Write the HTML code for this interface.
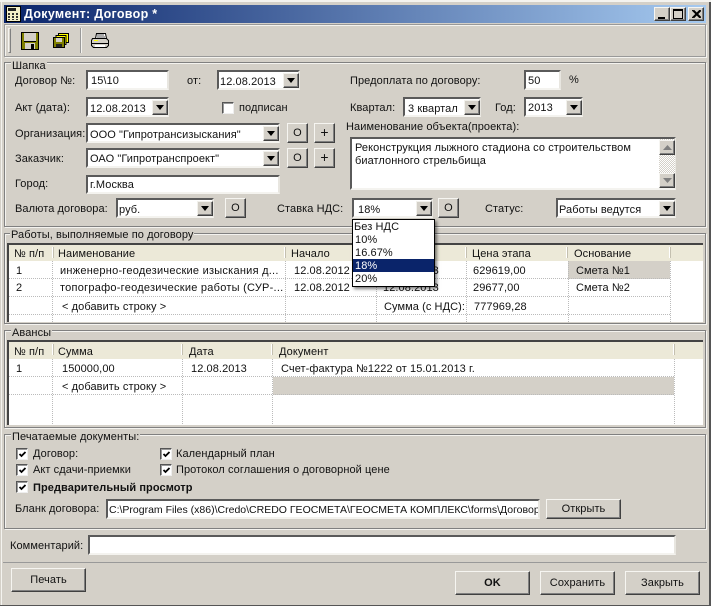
<!DOCTYPE html>
<html><head><meta charset="utf-8"><style>
html,body{margin:0;padding:0;background:#d4d0c8}
#w{position:relative;width:711px;height:606px;overflow:hidden;background:#d4d0c8;font:11px "Liberation Sans",sans-serif;color:#111;letter-spacing:.08px}
#w div,#w span,#w svg{position:absolute;box-sizing:border-box}
.t{white-space:nowrap;line-height:14px}
.f{background:#fff;border:2px solid;border-color:#5a5a5a #e8e6e0 #f4f3ef #5a5a5a}
.a{background:#d4d0c8;border:1px solid;border-color:#f2f1ec #404040 #404040 #f2f1ec;width:16px;height:15px;box-shadow:inset -1px -1px 0 #808080}
.a:after{content:"";position:absolute;left:3px;top:4px;border:4px solid transparent;border-top:5px solid #000;border-bottom:0}
.b{background:#d4d0c8;border:1px solid;border-color:#f6f5f1 #404040 #404040 #f6f5f1;box-shadow:inset -1px -1px 0 #808080;text-align:center;line-height:18px}
.g{border:1px solid #808080;box-shadow:inset 1px 1px 0 #f4f3ef,1px 1px 0 #f4f3ef}
.c{background:#fff;border:1px solid;border-color:#555 #eee #eee #555;width:12px;height:12px;box-shadow:inset 1px 1px 0 #999}
.c svg{left:1px;top:1px}
.h{background:#ece9d8}
.v{width:0;border-left:1px dotted #bbb}
.l{height:0;border-top:1px dotted #bbb}
.s{background:#fff;border-right:1px solid #c4c0b0;width:2px}
.lb{background:#d4d0c8;padding:0 1px}
.p{font-size:14px;line-height:17px}
</style></head><body><div id="w">

<div style="left:0;top:0;width:711px;height:2px;background:#f4f3ef"></div>
<div style="left:1px;top:2px;width:1px;height:604px;background:#f4f3ef"></div>
<div style="left:709px;top:2px;width:2px;height:604px;background:#555"></div>
<div style="left:0;top:605px;width:711px;height:1px;background:#555"></div>

<!-- title -->
<div style="left:4px;top:5px;width:702px;height:18px;background:linear-gradient(90deg,#0a246a,#a6caf0)"></div>
<svg style="left:6px;top:6px" width="16" height="16" viewBox="0 0 16 16"><rect x="0.5" y="0.5" width="14" height="15" fill="#f4efc8" stroke="#000"/><rect x="2" y="2" width="8" height="3" fill="#222"/><path d="M2 7h2v2H2zM6 7h2v2H6zM10 7h2v2h-2zM2 10h2v2H2zM6 10h2v2H6zM10 10h2v2h-2zM2 13h2v1H2zM6 13h2v1H6zM10 13h2v1h-2z" fill="#333"/></svg>
<span class="t" style="left:24px;top:7px;color:#fff;font-weight:bold;font-size:12.5px;letter-spacing:.3px">Документ: Договор *</span>
<div class="b" style="left:654px;top:7px;width:16px;height:14px"><span style="left:3px;top:9px;width:7px;height:2px;background:#000"></span></div>
<div class="b" style="left:670px;top:7px;width:16px;height:14px"><span style="left:2px;top:1px;width:10px;height:10px;border:1px solid #000;border-top-width:2px"></span></div>
<div class="b" style="left:688px;top:7px;width:16px;height:14px"><svg style="left:3px;top:2px" width="9" height="8" viewBox="0 0 9 8"><path d="M0 0l8 8M1.500 0l8 8M8 0l-8 8M9.500 0l-8 8" stroke="#000" fill="none" stroke-width="1.100"/></svg></div>

<!-- toolbar -->
<div style="left:4px;top:24px;width:702px;height:33px;border:1px solid #999;box-shadow:inset 1px 1px 0 #f4f3ef,1px 1px 0 #f4f3ef"></div>
<div style="left:8px;top:28px;width:3px;height:25px;background:#d4d0c8;border:1px solid;border-color:#f4f3ef #808080 #808080 #f4f3ef"></div>
<div style="left:80px;top:28px;width:2px;height:25px;border-left:1px solid #999;border-right:1px solid #f4f3ef"></div>
<svg style="left:21px;top:32px" width="18" height="18" viewBox="0 0 18 18"><path d="M0.500 0.500H17.500V17.500H0.500Z" fill="#808000" stroke="#000"/><rect x="3" y="1" width="12" height="8" fill="#d4d0c8"/><rect x="3" y="9" width="12" height="1" fill="#000"/><rect x="4" y="11" width="10" height="6" fill="#d4d0c8"/><rect x="10" y="12" width="3" height="5" fill="#000"/></svg>
<svg style="left:53px;top:33px" width="16" height="15" viewBox="0 0 16 15"><path d="M5.500 0.500H15.500V9.500H5.500Z" fill="#ffff00" stroke="#000"/><path d="M3 2.500H13V11.500H3Z" fill="#ffff00" stroke="#000"/><path d="M0.500 4.500H11.500V14.500H0.500Z" fill="#808000" stroke="#000"/><rect x="3" y="5" width="6" height="4" fill="#d4d0c8"/><rect x="3" y="11" width="6" height="3" fill="#222"/></svg>
<svg style="left:91px;top:33px" width="18" height="16" viewBox="0 0 18 16"><path d="M5.500 0.500H14.500L15.500 5.500H4.500Z" fill="#fff" stroke="#000"/><path d="M6 2h7M6 4h8" stroke="#555"/><path d="M1.500 5.500H15.500L17.500 7.500V12.500L15.500 14.500H2.500L0.500 12.500V7.500Z" fill="#d4d0c8" stroke="#000"/><path d="M1 10.500H17" stroke="#000"/><rect x="3" y="7" width="4" height="1" fill="#ffff00"/><rect x="4" y="12" width="10" height="2" fill="#fff"/></svg>

<!-- Шапка -->
<div class="g" style="left:4px;top:62px;width:702px;height:165px"></div>
<span class="t lb" style="left:11px;top:59px">Шапка</span>
<span class="t" style="left:15px;top:74px">Договор №:</span>
<div class="f" style="left:86px;top:70px;width:83px;height:20px"><span class="t" style="left:3px;top:2px">15\10</span></div>
<span class="t" style="left:187px;top:74px">от:</span>
<div class="f" style="left:217px;top:70px;width:83px;height:20px"><span class="t" style="left:1px;top:3px">12.08.2013</span><div class="a" style="left:64px;top:1px"></div></div>
<span class="t" style="left:350px;top:74px">Предоплата по договору:</span>
<div class="f" style="left:524px;top:70px;width:37px;height:20px"><span class="t" style="left:2px;top:2px">50</span></div>
<span class="t" style="left:569px;top:73px">%</span>

<span class="t" style="left:15px;top:101px">Акт (дата):</span>
<div class="f" style="left:86px;top:97px;width:83px;height:20px"><span class="t" style="left:2px;top:3px">12.08.2013</span><div class="a" style="left:64px;top:1px"></div></div>
<div class="c" style="left:222px;top:102px"></div>
<span class="t" style="left:239px;top:101px">подписан</span>
<span class="t" style="left:350px;top:101px">Квартал:</span>
<div class="f" style="left:403px;top:97px;width:78px;height:20px"><span class="t" style="left:3px;top:3px">3 квартал</span><div class="a" style="left:59px;top:1px"></div></div>
<span class="t" style="left:495px;top:101px">Год:</span>
<div class="f" style="left:524px;top:97px;width:59px;height:20px"><span class="t" style="left:2px;top:2px">2013</span><div class="a" style="left:40px;top:1px"></div></div>

<span class="t" style="left:15px;top:127px">Организация:</span>
<div class="f" style="left:86px;top:123px;width:194px;height:20px"><span class="t" style="left:2px;top:3px">ООО "Гипротрансизыскания"</span><div class="a" style="left:175px;top:1px"></div></div>
<div class="b" style="left:287px;top:123px;width:21px;height:20px">О</div>
<div class="b p" style="left:314px;top:123px;width:21px;height:20px">+</div>
<span class="t" style="left:15px;top:152px">Заказчик:</span>
<div class="f" style="left:86px;top:148px;width:194px;height:20px"><span class="t" style="left:2px;top:2px">ОАО "Гипротранспроект"</span><div class="a" style="left:175px;top:1px"></div></div>
<div class="b" style="left:287px;top:148px;width:21px;height:20px">О</div>
<div class="b p" style="left:314px;top:148px;width:21px;height:20px">+</div>
<span class="t" style="left:15px;top:177px">Город:</span>
<div class="f" style="left:86px;top:175px;width:194px;height:19px"><span class="t" style="left:2px;top:1px">г.Москва</span></div>

<span class="t" style="left:346px;top:120px">Наименование объекта(проекта):</span>
<div class="f" style="left:350px;top:137px;width:326px;height:53px"><span class="t" style="left:3px;top:3px;line-height:13px">Реконструкция лыжного стадиона со строительством<br>биатлонного стрельбища</span>
<div style="left:307px;top:0;width:16px;height:49px;background:repeating-conic-gradient(#d4d0c8 0 25%,#fff 0 50%) 0 0/2px 2px"></div>
<div class="b" style="left:307px;top:1px;width:16px;height:15px"><svg style="left:3px;top:4px" width="9" height="5"><path d="M4.500 0L9 5H0Z" fill="#808080"/></svg></div>
<div class="b" style="left:307px;top:34px;width:16px;height:15px"><svg style="left:3px;top:4px" width="9" height="5"><path d="M0 0H9L4.500 5Z" fill="#808080"/></svg></div></div>

<span class="t" style="left:15px;top:202px">Валюта договора:</span>
<div class="f" style="left:116px;top:198px;width:98px;height:20px"><span class="t" style="left:1px;top:3px">руб.</span><div class="a" style="left:79px;top:1px"></div></div>
<div class="b" style="left:225px;top:198px;width:21px;height:20px">О</div>
<span class="t" style="left:277px;top:202px">Ставка НДС:</span>
<div class="f" style="left:352px;top:198px;width:81px;height:20px"><span class="t" style="left:4px;top:3px">18%</span><div class="a" style="left:62px;top:1px"></div></div>
<div class="b" style="left:438px;top:198px;width:21px;height:20px">О</div>
<span class="t" style="left:485px;top:202px">Статус:</span>
<div class="f" style="left:556px;top:198px;width:120px;height:20px"><span class="t" style="left:1px;top:3px">Работы ведутся</span><div class="a" style="left:101px;top:1px"></div></div>

<!-- Работы -->
<div class="g" style="left:4px;top:233px;width:702px;height:91px"></div>
<span class="t lb" style="left:10px;top:228px">Работы, выполняемые по договору</span>
<div style="left:7px;top:243px;width:696px;height:79px;background:#fff;border-top:2px solid #444;border-left:2px solid #444"></div>
<div class="h" style="left:9px;top:245px;width:694px;height:16px"></div>
<div class="s" style="left:52px;top:247px;height:11px"></div>
<div class="s" style="left:284px;top:247px;height:11px"></div>
<div class="s" style="left:465px;top:247px;height:11px"></div>
<div class="s" style="left:566px;top:247px;height:11px"></div>
<div class="s" style="left:669px;top:247px;height:11px"></div>
<span class="t" style="left:14px;top:247px">№ п/п</span>
<span class="t" style="left:58px;top:247px">Наименование</span>
<span class="t" style="left:291px;top:247px">Начало</span>
<span class="t" style="left:472px;top:247px">Цена этапа</span>
<span class="t" style="left:574px;top:247px">Основание</span>
<div style="left:568px;top:261px;width:102px;height:18px;background:#d4d0c8"></div>
<div class="v" style="left:52px;top:261px;height:61px"></div>
<div class="v" style="left:285px;top:261px;height:61px"></div>
<div class="v" style="left:376px;top:261px;height:61px"></div>
<div class="v" style="left:466px;top:261px;height:61px"></div>
<div class="v" style="left:568px;top:261px;height:61px"></div>
<div class="v" style="left:670px;top:261px;height:61px"></div>
<div class="l" style="left:9px;top:278px;width:661px"></div>
<div class="l" style="left:9px;top:296px;width:661px"></div>
<div class="l" style="left:9px;top:314px;width:661px"></div>
<span class="t" style="left:16px;top:264px">1</span>
<span class="t" style="left:60px;top:264px;letter-spacing:.25px">инженерно-геодезические изыскания д...</span>
<span class="t" style="left:294px;top:264px">12.08.2012</span>
<span class="t" style="left:383px;top:264px">12.08.2013</span>
<span class="t" style="left:473px;top:264px">629619,00</span>
<span class="t" style="left:576px;top:264px">Смета №1</span>
<span class="t" style="left:16px;top:281px">2</span>
<span class="t" style="left:60px;top:281px;letter-spacing:.25px">топографо-геодезические работы (СУР-...</span>
<span class="t" style="left:294px;top:281px">12.08.2012</span>
<span class="t" style="left:383px;top:281px">12.08.2013</span>
<span class="t" style="left:473px;top:281px">29677,00</span>
<span class="t" style="left:576px;top:281px">Смета №2</span>
<span class="t" style="left:62px;top:300px">&lt; добавить строку &gt;</span>
<span class="t" style="left:384px;top:300px">Сумма (с НДС):</span>
<span class="t" style="left:474px;top:300px">777969,28</span>

<!-- Авансы -->
<div class="g" style="left:4px;top:330px;width:702px;height:98px"></div>
<span class="t lb" style="left:11px;top:326px">Авансы</span>
<div style="left:7px;top:340px;width:696px;height:85px;background:#fff;border-top:2px solid #444;border-left:2px solid #444"></div>
<div class="h" style="left:9px;top:342px;width:694px;height:17px"></div>
<div class="s" style="left:52px;top:344px;height:11px"></div>
<div class="s" style="left:181px;top:344px;height:11px"></div>
<div class="s" style="left:271px;top:344px;height:11px"></div>
<div class="s" style="left:673px;top:344px;height:11px"></div>
<span class="t" style="left:14px;top:345px">№ п/п</span>
<span class="t" style="left:58px;top:345px">Сумма</span>
<span class="t" style="left:189px;top:345px">Дата</span>
<span class="t" style="left:279px;top:345px">Документ</span>
<div style="left:273px;top:377px;width:401px;height:18px;background:#d4d0c8"></div>
<div class="v" style="left:52px;top:359px;height:65px"></div>
<div class="v" style="left:182px;top:359px;height:65px"></div>
<div class="v" style="left:272px;top:359px;height:65px"></div>
<div class="v" style="left:674px;top:359px;height:65px"></div>
<div class="l" style="left:9px;top:376px;width:665px"></div>
<div class="l" style="left:9px;top:394px;width:665px"></div>
<span class="t" style="left:16px;top:362px">1</span>
<span class="t" style="left:62px;top:362px">150000,00</span>
<span class="t" style="left:191px;top:362px">12.08.2013</span>
<span class="t" style="left:281px;top:362px">Счет-фактура №1222 от 15.01.2013 г.</span>
<span class="t" style="left:62px;top:380px">&lt; добавить строку &gt;</span>

<!-- Печатаемые -->
<div class="g" style="left:4px;top:434px;width:702px;height:95px"></div>
<span class="t lb" style="left:11px;top:430px">Печатаемые документы:</span>
<div class="c" style="left:16px;top:448px"><svg width="9" height="9"><path d="M1.500 4l2 2L7.500 2" fill="none" stroke="#000" stroke-width="1.800"/></svg></div>
<span class="t" style="left:33px;top:447px">Договор:</span>
<div class="c" style="left:160px;top:448px"><svg width="9" height="9"><path d="M1.500 4l2 2L7.500 2" fill="none" stroke="#000" stroke-width="1.800"/></svg></div>
<span class="t" style="left:176px;top:447px">Календарный план</span>
<div class="c" style="left:16px;top:464px"><svg width="9" height="9"><path d="M1.500 4l2 2L7.500 2" fill="none" stroke="#000" stroke-width="1.800"/></svg></div>
<span class="t" style="left:33px;top:463px">Акт сдачи-приемки</span>
<div class="c" style="left:160px;top:464px"><svg width="9" height="9"><path d="M1.500 4l2 2L7.500 2" fill="none" stroke="#000" stroke-width="1.800"/></svg></div>
<span class="t" style="left:176px;top:463px">Протокол соглашения о договорной цене</span>
<div class="c" style="left:16px;top:481px"><svg width="9" height="9"><path d="M1.500 4l2 2L7.500 2" fill="none" stroke="#000" stroke-width="1.800"/></svg></div>
<span class="t" style="left:33px;top:481px;font-weight:bold">Предварительный просмотр</span>
<span class="t" style="left:15px;top:502px">Бланк договора:</span>
<div class="f" style="left:106px;top:499px;width:434px;height:20px;overflow:hidden"><span class="t" style="left:1px;top:2px;letter-spacing:0;font-size:10.5px">C:\Program Files (x86)\Credo\CREDO ГЕОСМЕТА\ГЕОСМЕТА КОМПЛЕКС\forms\Договор</span></div>
<div class="b" style="left:546px;top:499px;width:75px;height:20px">Открыть</div>

<span class="t" style="left:10px;top:539px">Комментарий:</span>
<div class="f" style="left:88px;top:535px;width:588px;height:20px"></div>
<div style="left:3px;top:562px;width:704px;height:1px;background:#999"></div>
<div class="b" style="left:11px;top:568px;width:75px;height:24px;line-height:22px">Печать</div>
<div class="b" style="left:455px;top:571px;width:75px;height:24px;line-height:22px;font-weight:bold">OK</div>
<div class="b" style="left:540px;top:571px;width:75px;height:24px;line-height:22px">Сохранить</div>
<div class="b" style="left:625px;top:571px;width:75px;height:24px;line-height:22px">Закрыть</div>

<!-- dropdown -->
<div style="left:352px;top:219px;width:83px;height:68px;background:#fff;border:1px solid #000;box-shadow:2px 2px 3px rgba(0,0,0,.5)">
<div style="left:0;top:39px;width:81px;height:13px;background:#0a246a"></div>
<span class="t" style="left:1px;top:1px;line-height:13px">Без НДС</span>
<span class="t" style="left:2px;top:14px;line-height:13px">10%</span>
<span class="t" style="left:2px;top:27px;line-height:13px">16.67%</span>
<span class="t" style="left:2px;top:40px;line-height:13px;color:#fff">18%</span>
<span class="t" style="left:2px;top:53px;line-height:13px">20%</span>
</div>
</div></body></html>
